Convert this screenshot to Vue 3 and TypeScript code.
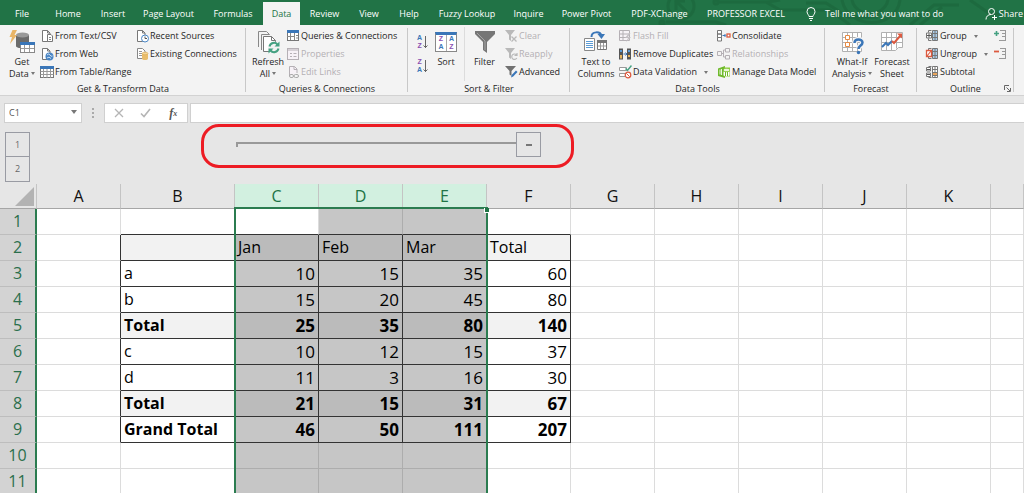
<script setup lang="ts">
import { ref } from 'vue'

interface Tool {
  icon: string
  label: string
  disabled?: boolean
  menu?: boolean
}

const tabs: string[] = [
  'File', 'Home', 'Insert', 'Page Layout', 'Formulas', 'Data', 'Review', 'View',
  'Help', 'Fuzzy Lookup', 'Inquire', 'Power Pivot', 'PDF-XChange', 'PROFESSOR EXCEL',
]
const activeTab = ref('Data')

const page = '<path d="M2.500 1.500h5l2.500 2.500v8.500h-7.500z" fill="#fff" stroke="#777"/><path d="M7.500 1.500v2.500h2.500" fill="none" stroke="#777"/>'

const icons: Record<string, string> = {
  csv: page + '<path d="M7.500 5.500h3.500l1.500 1.500v5.500h-5z" fill="#fff" stroke="#777"/><path d="M9 8.500h2M9 10.500h2" stroke="#888"/>',
  web: page + '<circle cx="9.500" cy="9.500" r="4" fill="#4a86c5"/><path d="M7 8q2-2 3 0t2.500 1M7 11q2-2 4 .5" stroke="#cfe1f3" fill="none"/>',
  table: '<rect x=".5" y="1.500" width="13" height="11" fill="#fff" stroke="#777"/><path d="M0 1h14v3H0z" fill="#3a76b8"/><path d="M.5 6.500h13M.5 9.500h13M3.500 4v9M7 4v9M10.500 4v9" stroke="#999"/>',
  recent: page + '<circle cx="10" cy="9.500" r="3.500" fill="#fff" stroke="#4a86c5"/><path d="M10 7.500v2h2" stroke="#555" fill="none"/>',
  existing: '<path d="M2.500 1.500h5l2.500 2.500v7.500h-7.500z" fill="#fff" stroke="#888"/><path d="M4 4.500h3M4 6.500h4M4 8.500h4" stroke="#999"/><path d="M7 6.500v5c0 2 6 2 6 0v-5z" fill="#e9bd6c"/><ellipse cx="10" cy="6.500" rx="3" ry="1.300" fill="#f5d698" stroke="#d9a64c" stroke-width=".6"/>',
  queries: '<rect x="1.500" y="1.500" width="11" height="10" fill="#fff" stroke="#777"/><path d="M1 1h12v3H1z" fill="#3a76b8"/><path d="M8.500 4v7M1 7.500h7M4.500 4v7M10 6.500h2M10 9h2" stroke="#888"/>',
  properties: '<rect x="1.500" y="1.500" width="11" height="11" fill="#f7f2f7" stroke="#b5b0b5"/><path d="M1.500 3h11M4 6.500h2M7.500 6.500h3M4 9.500h2M7.500 9.500h3" stroke="#b5b0b5"/>',
  links: '<path d="M3.500 11v-9.500h5l2.500 2.500v4" fill="#f7f2f7" stroke="#b5b0b5"/><path d="M8 1.500v3h3" stroke="#b5b0b5" fill="none"/><rect x="3.500" y="9.500" width="4" height="3" rx="1.500" fill="none" stroke="#aaa"/><rect x="8" y="9.500" width="4.500" height="3" rx="1.500" fill="none" stroke="#aaa"/>',
  clear: '<path d="M1 1h10l-4 5v6l-2-1.500V6z" fill="#b9b9b9"/><path d="M7.500 7.500l5 5m0-5l-5 5" stroke="#b9b9b9" stroke-width="1.300"/>',
  reapply: '<path d="M1 1h10l-4 5v6l-2-1.500V6z" fill="#b9b9b9"/><path d="M12.500 8a2.700 2.700 0 1 0 .3 3M13 6v2.500h-2.500" stroke="#b9b9b9" fill="none" stroke-width="1.200"/>',
  advanced: '<path d="M1 1h11l-4.500 5v5l-2-1.500V6z" fill="#707070"/><path d="M7 12.500l.7-2.500L12 5.500l1.500 1.500-4.300 4.600z" fill="#3a76b8"/>',
  flash: '<path d="M1.500 1.500h10v10h-10zM1.500 5h10M1.500 8.500h10M5 1.500v10" fill="#f7f2f7" stroke="#b5b0b5"/><path d="M11 4l-4 5h3l-2 4 5-5h-3l2.500-4z" fill="#c5c0c5"/>',
  duplicates: '<path d="M1 1.500h4v11H1zM9 1.500h4v11H9z" fill="#555"/><path d="M2 3h2v2H2zM10 3h2v2h-2z" fill="#5b9bd5"/><path d="M2 8h2v3.500H2zM10 8h2v2h-2z" fill="#e9b55c"/><path d="M5.500 7h3M7.500 5.500L9 7 7.500 8.500" stroke="#3a76b8" fill="none"/>',
  validation: '<path d="M1.500 2.500h7v3h-7zM1.500 8.500h6v3h-6z" fill="#fff" stroke="#999"/><path d="M7.500 3.500l2 2 4-5" stroke="#45a182" fill="none" stroke-width="1.500"/><circle cx="10" cy="10" r="2.800" fill="#fff" stroke="#dc5a40" stroke-width="1.200"/><path d="M8.300 8.300l3.400 3.400" stroke="#dc5a40"/>',
  consolidate: '<path d="M.5 1.500h4v3.500h-4zM.5 5h4v3.500h-4zM.5 8.500h4V12h-4z" fill="#fff" stroke="#777"/><path d="M5.500 6.500h3M7.500 5l1.500 1.500L7.500 8" stroke="#3a76b8" fill="none"/><rect x="10" y="5" width="3" height="3" fill="#fff" stroke="#dc5a40" stroke-width="1.300"/>',
  relationships: '<path d="M.5 4.500h4v4h-4zM8.500 1.500h4V5h-4zM8.500 8.500h4V12h-4zM4.500 6.500h2M8.500 3h-2v7h2" fill="none" stroke="#b5b0b5"/>',
  model: '<path d="M1 3.500L8 1v12L1 11z" fill="#6fb92c"/><path d="M7 2.500h6v9H7z" fill="#8acb3a"/><ellipse cx="9.500" cy="5" rx="3" ry="1.200" fill="#eaf6dc"/><path d="M6.500 6.500q3 1.500 6 0v4q-3 1.500-6 0z" fill="#fff"/><path d="M3 4.500v5M4.500 4v6" stroke="#eaf6dc"/><path d="M8.500 7v4M10.500 7v4" stroke="#6fb92c"/>',
  group: '<path d="M7.500 1.500h5v10h-5z" fill="#a9cbe9" stroke="#777"/><path d="M7.500 4.500h5M7.500 8.500h5M10 1.500v10M6.500 1.500h-3v2M6.500 11.500h-3v-2" stroke="#777" fill="none"/><path d="M1.500 4h5v5h-5z" fill="#fff" stroke="#777"/><path d="M4 4.500v4M2 6.500h4" stroke="#555"/>',
  ungroup: '<path d="M7.500 1.500h5v10h-5z" fill="#a9cbe9" stroke="#777"/><path d="M7.500 4.500h5M7.500 8.500h5M10 1.500v10M6.500 1.500h-3v2M6.500 11.500h-3v-2" stroke="#777" fill="none"/><path d="M1.500 3.500h5v6h-5z" fill="#fff" stroke="#dc5a40" stroke-width="1.300"/><path d="M2 9l4-5" stroke="#dc5a40" stroke-width="1.200"/>',
  subtotal: '<path d="M7.500 1.500h5v11h-5z" fill="#fff" stroke="#777"/><path d="M7.500 4.500h5M7.500 7.500h5M7.500 10.500h5M10 1.500v11M6.500 1.500h-3M6.500 12.500h-3" stroke="#777" fill="none"/><path d="M1.500 2.500h4v3.500h-4zM1.500 8h4v3.500h-4z" fill="#fff" stroke="#777"/><path d="M2 4.500h3M2 9.500h3" stroke="#555"/><path d="M8 8h4v2H8z" fill="#e9a55c"/>',
  getData: '<path d="M12 5v11c0 3 13 3 13 0V5z" fill="#6b6b6b" transform="translate(-5 1)"/><ellipse cx="13.500" cy="6" rx="6.500" ry="2.500" fill="#999"/><path d="M3.500 1H8L5.500 6H8L1 15l2-7H.5z" fill="#e9b567"/><rect x="11.500" y="13.500" width="14" height="10" fill="#fff" stroke="#888"/><path d="M11 13h15v3H11z" fill="#3a76b8"/><path d="M12 19.500h13M15.500 16v7M20.500 16v7" stroke="#999"/>',
  refresh: '<path d="M3.500 18V2.500h8l3 3M6.500 21V5.500h8" fill="none" stroke="#888"/><path d="M8.500 7.500h8l4 4v11h-12z" fill="#fff" stroke="#777"/><path d="M16.500 7.500v4h4" fill="none" stroke="#777"/><circle cx="19" cy="18.500" r="6" fill="#f3f3f3"/><path d="M14.500 17.500a4.600 4.600 0 0 1 8-2M23.500 19.500a4.600 4.600 0 0 1-8 2" fill="none" stroke="#45a182" stroke-width="2"/><path d="M24.500 12.500v5h-5zM13.500 24.500v-5h5z" fill="#45a182"/>',
  filter: '<path d="M3 2h20v3l-8 8v11l-4-3v-8L3 5z" fill="#767676"/><path d="M5 4l8 8v9" stroke="#a5a5a5" fill="none"/>',
  columns: '<path d="M1.500 9.500h10v12h-10z" fill="#fff" stroke="#888"/><path d="M3 12.500h7M3 14.500h7M3 16.500h7M3 18.500h7" stroke="#5b9bd5"/><path d="M14.500 12.500h9v8h-9z" fill="#fff" stroke="#777"/><path d="M14 11h10v3H14z" fill="#777"/><path d="M15 17h8M17.500 14v6M20.500 14v6" stroke="#999"/><path d="M8.500 8c0-6 9-6 10-1" stroke="#3a76b8" fill="none" stroke-width="2"/><path d="M14.500 5h7.500l-3.500 5z" fill="#3a76b8"/>',
  whatIf: '<path d="M3.500 3.500h19v19h-19zM3.500 8.500h19M3.500 13.500h19M3.500 18.500h19M8.500 3.500v19M13.500 3.500v19M18.500 3.500v19" fill="#fff" stroke="#b0b0b0"/><path d="M6.500 6.500h4v4h-4zM6.500 13.500h4v4h-4z" fill="#fff" stroke="#e78a42"/><path d="M15.500 14.500c0-6 8-5 8-1 0 3-4 3-4 6.500" stroke="#f3f3f3" stroke-width="5" fill="none"/><path d="M15.500 14c0-5 8-4.500 8-.5 0 3-4 3-4 6.500" stroke="#3a76b8" stroke-width="2.500" fill="none"/><circle cx="19.500" cy="23.500" r="1.700" fill="#3a76b8"/>',
  forecast: '<path d="M2.500 3.500h21v15h-4l-3 3h-14zM2.500 8.500h21M2.500 13.500h21M7.500 3.500v18M12.500 3.500v18M17.500 3.500v16" fill="#fff" stroke="#b0b0b0"/><path d="M3 18l4-4 2 2 4-4" stroke="#3a76b8" stroke-width="2" fill="none"/><path d="M13 12l2 2 7-8" stroke="#dc5a40" stroke-width="2" fill="none"/><path d="M18 4.500h5v5z" fill="#dc5a40"/>',
}

const getTools: Tool[][] = [
  [
    { icon: 'csv', label: 'From Text/CSV' },
    { icon: 'web', label: 'From Web' },
    { icon: 'table', label: 'From Table/Range' },
  ],
  [
    { icon: 'recent', label: 'Recent Sources' },
    { icon: 'existing', label: 'Existing Connections' },
  ],
]
const queryTools: Tool[] = [
  { icon: 'queries', label: 'Queries & Connections' },
  { icon: 'properties', label: 'Properties', disabled: true },
  { icon: 'links', label: 'Edit Links', disabled: true },
]
const filterTools: Tool[] = [
  { icon: 'clear', label: 'Clear', disabled: true },
  { icon: 'reapply', label: 'Reapply', disabled: true },
  { icon: 'advanced', label: 'Advanced' },
]
const dataTools: Tool[][] = [
  [
    { icon: 'flash', label: 'Flash Fill', disabled: true },
    { icon: 'duplicates', label: 'Remove Duplicates' },
    { icon: 'validation', label: 'Data Validation', menu: true },
  ],
  [
    { icon: 'consolidate', label: 'Consolidate' },
    { icon: 'relationships', label: 'Relationships', disabled: true },
    { icon: 'model', label: 'Manage Data Model' },
  ],
]
const outlineTools: Tool[] = [
  { icon: 'group', label: 'Group', menu: true },
  { icon: 'ungroup', label: 'Ungroup', menu: true },
  { icon: 'subtotal', label: 'Subtotal' },
]

const columns: string[] = ['A', 'B', 'C', 'D', 'E', 'F', 'G', 'H', 'I', 'J', 'K', '']
const rowCount = 11
const sheet: Record<number, (string | number)[]> = {
  2: ['', 'Jan', 'Feb', 'Mar', 'Total'],
  3: ['a', 10, 15, 35, 60],
  4: ['b', 15, 20, 45, 80],
  5: ['Total', 25, 35, 80, 140],
  6: ['c', 10, 12, 15, 37],
  7: ['d', 11, 3, 16, 30],
  8: ['Total', 21, 15, 31, 67],
  9: ['Grand Total', 46, 50, 111, 207],
}

const isSelected = (c: number): boolean => c >= 2 && c <= 4

function cellValue(r: number, c: number): string | number {
  return c >= 1 && c <= 5 ? sheet[r]?.[c - 1] ?? '' : ''
}

function cellClass(r: number, c: number): Record<string, boolean> {
  const inTable = r >= 2 && r <= 9 && c >= 1 && c <= 5
  return {
    selected: isSelected(c) && !(r === 1 && c === 2),
    shaded: inTable && (r === 2 || r === 5 || r === 8),
    bold: inTable && (r === 5 || r >= 8),
    number: typeof cellValue(r, c) === 'number',
    'line-right': r >= 2 && r <= 9 && c <= 5,
    'line-bottom': r <= 9 && c >= 1 && c <= 5,
  }
}

const cellName = ref('C1')
const formula = ref('')
</script>

<template>
  <div class="app">
    <nav class="tabbar" aria-label="Ribbon tabs">
      <svg class="circuit" viewBox="0 0 400 25" aria-hidden="true">
        <g fill="none" stroke="#1b6339" stroke-width="3">
          <circle cx="61" cy="6" r="13" />
          <path d="M55 0l12 12M56 10V1h9" />
          <path d="M98 2h50l12 -2M46 22h50l10 3M146 2l14 8h50l20 15M186 3h20l22 14h30M232 0c4 18 32 18 36 0M222 0c6 30 54 30 58 0M290 25l24-20h25M300 25l22-18M350 0l20 14h30" />
          <circle cx="96" cy="2" r="2" /><circle cx="42" cy="23" r="2" />
        </g>
      </svg>
      <button
        v-for="tab in tabs" :key="tab" class="tab" :class="{ active: tab === activeTab }"
        type="button" @click="activeTab = tab"
      >{{ tab }}</button>
      <button class="tell" type="button">
        <svg width="12" height="14" viewBox="0 0 12 14" fill="none" stroke="#fff" aria-hidden="true">
          <path d="M4 9.500c0-1.500-2-2.500-2-5a4 4 0 0 1 8 0c0 2.500-2 3.500-2 5zM4 11.500h4M5 13.500h2" />
        </svg>
        <span>Tell me what you want to do</span>
      </button>
      <button class="share" type="button">
        <svg width="13" height="14" viewBox="0 0 13 14" fill="none" stroke="#fff" aria-hidden="true">
          <circle cx="6.500" cy="4.500" r="3" /><path d="M1 12.500c0-3 2-5 5-5M7 10.500h5M9.500 8v5" />
        </svg>
        <span>Share</span>
      </button>
    </nav>

    <div class="ribbon">
      <section class="group">
        <div class="tools">
          <button class="large get" type="button">
            <svg viewBox="0 0 26 26" v-html="icons.getData" />
            <span>Get<br>Data <i class="caret" /></span>
          </button>
          <div v-for="(col, i) in getTools" :key="i" class="stack" :class="{ first: i === 0 }">
            <button v-for="t in col" :key="t.label" class="small" type="button">
              <svg viewBox="0 0 14 14" v-html="icons[t.icon]" />{{ t.label }}
            </button>
          </div>
        </div>
        <h2>Get &amp; Transform Data</h2>
      </section>

      <section class="group">
        <div class="tools">
          <button class="large get" type="button">
            <svg viewBox="0 0 26 26" v-html="icons.refresh" />
            <span>Refresh<br>All <i class="caret" /></span>
          </button>
          <div class="stack">
            <button v-for="t in queryTools" :key="t.label" class="small" type="button" :disabled="t.disabled">
              <svg viewBox="0 0 14 14" v-html="icons[t.icon]" />{{ t.label }}
            </button>
          </div>
        </div>
        <h2>Queries &amp; Connections</h2>
      </section>

      <section class="group">
        <div class="tools">
          <div class="orders">
            <button type="button" aria-label="Sort A to Z">
              <span class="pair"><b class="a">A</b><b class="z">Z</b></span>
              <svg width="5" height="14" viewBox="0 0 5 14" fill="none" stroke="#666"><path d="M2.500 1v12M.5 10.500l2 2 2-2" /></svg>
            </button>
            <button type="button" aria-label="Sort Z to A">
              <span class="pair"><b class="z">Z</b><b class="a">A</b></span>
              <svg width="5" height="14" viewBox="0 0 5 14" fill="none" stroke="#666"><path d="M2.500 1v12M.5 10.500l2 2 2-2" /></svg>
            </button>
          </div>
          <button class="large sort" type="button">
            <span class="sort-icon">
              <span class="pair"><b class="z">Z</b><b class="a">A</b></span>
              <span class="pair"><b class="a">A</b><b class="z">Z</b></span>
            </span>
            <span>Sort</span>
          </button>
          <button class="large filter" type="button">
            <svg viewBox="0 0 26 26" v-html="icons.filter" />
            <span>Filter</span>
          </button>
          <div class="stack">
            <button v-for="t in filterTools" :key="t.label" class="small" type="button" :disabled="t.disabled">
              <svg viewBox="0 0 14 14" v-html="icons[t.icon]" />{{ t.label }}
            </button>
          </div>
        </div>
        <h2>Sort &amp; Filter</h2>
      </section>

      <section class="group">
        <div class="tools">
          <button class="large wide" type="button">
            <svg viewBox="0 0 26 26" v-html="icons.columns" />
            <span>Text to<br>Columns</span>
          </button>
          <div v-for="(col, i) in dataTools" :key="i" class="stack" :class="{ second: i === 0 }">
            <button v-for="t in col" :key="t.label" class="small" type="button" :disabled="t.disabled">
              <svg viewBox="0 0 14 14" v-html="icons[t.icon]" />{{ t.label }}<i v-if="t.menu" class="caret" />
            </button>
          </div>
        </div>
        <h2>Data Tools</h2>
      </section>

      <section class="group">
        <div class="tools center">
          <button class="large" type="button">
            <svg viewBox="0 0 26 26" v-html="icons.whatIf" />
            <span>What-If<br>Analysis <i class="caret" /></span>
          </button>
          <button class="large" type="button">
            <svg viewBox="0 0 26 26" v-html="icons.forecast" />
            <span>Forecast<br>Sheet</span>
          </button>
        </div>
        <h2>Forecast</h2>
      </section>

      <section class="group">
        <div class="tools outline">
          <div class="stack">
            <button v-for="t in outlineTools" :key="t.label" class="small" type="button">
              <svg viewBox="0 0 14 14" v-html="icons[t.icon]" />{{ t.label }}<i v-if="t.menu" class="caret" />
            </button>
          </div>
          <div class="stack">
            <button class="small" type="button" aria-label="Show Detail">
              <svg viewBox="0 0 14 14" fill="none"><path d="M0 4.500h5M2.500 2v5" stroke="#45a182" stroke-width="1.600" /><path d="M6 1.500h6M8 4.500h4M8 7.500h4M5 11.500h7M11.500 1v11" stroke="#999" /></svg>
            </button>
            <button class="small" type="button" aria-label="Hide Detail">
              <svg viewBox="0 0 14 14" fill="none"><path d="M0 4.500h5" stroke="#dc5a40" stroke-width="1.800" /><path d="M6 1.500h6M8 4.500h4M8 7.500h4M5 11.500h7M11.500 1v11" stroke="#999" /></svg>
            </button>
          </div>
        </div>
        <h2>Outline</h2>
        <button class="launcher" type="button" aria-label="Outline settings">
          <svg width="7" height="7" viewBox="0 0 7 7" fill="none" stroke="#666"><path d="M.5 5V.5H5M2.500 2.500l3.500 3.500M6.500 3v3.500H3" /></svg>
        </button>
      </section>
    </div>

    <div class="formula-bar">
      <div class="name-box">
        <input v-model="cellName" aria-label="Name box">
        <button type="button" aria-label="Names"><i class="caret" /></button>
      </div>
      <span class="grip"><i /><i /><i /></span>
      <div class="entry">
        <button type="button" aria-label="Cancel"><svg width="10" height="10" viewBox="0 0 10 10" fill="none" stroke="#b5b5b5" stroke-width="1.300"><path d="M1 1l8 8M9 1L1 9" /></svg></button>
        <button type="button" aria-label="Enter"><svg width="11" height="10" viewBox="0 0 11 10" fill="none" stroke="#b5b5b5" stroke-width="1.600"><path d="M1 5.500l3 3L10 1" /></svg></button>
        <button class="fx" type="button" aria-label="Insert Function">f<sub>x</sub></button>
      </div>
      <input v-model="formula" class="formula" aria-label="Formula">
    </div>

    <div class="outline-bar">
      <div class="levels">
        <button type="button">1</button>
        <button type="button">2</button>
      </div>
      <div class="bracket">
        <span class="line" />
        <div class="dots"><i /><i /><i /></div>
      </div>
      <button class="collapse" type="button" aria-label="Collapse columns"><i /></button>
      <div class="callout" />
    </div>

    <main class="grid">
      <table>
        <colgroup>
          <col class="w-head"><col class="w-std"><col class="w-label">
          <col v-for="n in 9" :key="n" class="w-std">
          <col>
        </colgroup>
        <thead>
          <tr>
            <th class="corner"><svg width="19" height="19" viewBox="0 0 19 19"><path d="M19 0v19H0z" fill="#b3b3b3" /></svg></th>
            <th v-for="(name, c) in columns" :key="c" scope="col" :class="{ picked: isSelected(c) }">{{ name }}</th>
          </tr>
        </thead>
        <tbody>
          <tr v-for="r in rowCount" :key="r">
            <th scope="row">{{ r }}</th>
            <td v-for="(name, c) in columns" :key="c" :class="cellClass(r, c)">{{ cellValue(r, c) }}</td>
          </tr>
        </tbody>
      </table>
      <div class="selection"><i /></div>
    </main>
  </div>
</template>

<style>
body {
  margin: 0;
  overflow: hidden;
}
</style>

<style scoped>
.app,
.app * {
  box-sizing: border-box;
}
.app {
  height: 100vh;
  overflow: hidden;
  background: #e6e6e6;
  color: #262626;
  font: 9px/12px "Open Sans", "Noto Sans", sans-serif;
}
button {
  margin: 0;
  padding: 0;
  border: 0;
  background: none;
  color: inherit;
  font: inherit;
  white-space: nowrap;
}
input {
  min-width: 0;
  border: 0;
  background: #fff;
  color: #555;
  font: inherit;
  outline: none;
}
svg {
  flex: none;
  display: block;
}

/* Tabs */
.tabbar {
  position: relative;
  display: grid;
  grid-template-columns: 44px 48px 42px 69px 60px 37px 49px 40px 40px 76px 47px 69px 77px 96px 1fr auto;
  height: 25px;
  padding-top: 2px;
  background: #217346;
  color: #fff;
}
.circuit {
  position: absolute;
  top: 0;
  right: 4px;
  width: 400px;
  height: 25px;
  opacity: 0.5;
}
.tab {
  position: relative;
}
.tab.active {
  background: #f3f3f3;
  color: #217346;
}
.tell,
.share {
  position: relative;
  display: flex;
  align-items: center;
  gap: 8px;
  padding-left: 11px;
}
.share {
  gap: 1px;
  padding-right: 1px;
}

/* Ribbon */
.ribbon {
  display: grid;
  grid-template-columns: 246fr 162fr 162fr 255fr 92fr 97fr 10fr;
  height: 71px;
  padding-top: 2px;
  border-bottom: 1px solid #d2d2d2;
  background: #f3f3f3;
}
.group {
  position: relative;
  min-width: 0;
}
.group::after {
  content: "";
  position: absolute;
  top: 1px;
  right: 0;
  bottom: 3px;
  width: 1px;
  background: #c8c8c8;
}
.group h2 {
  margin: 1px 0 0;
  font: inherit;
  line-height: 13px;
  text-align: center;
}
.tools {
  display: flex;
  height: 54px;
}
.tools.center {
  justify-content: center;
  padding-left: 2px;
}
.tools.outline {
  justify-content: space-between;
  padding: 0 6px 0 8px;
}
.large {
  display: flex;
  flex-direction: column;
  align-items: center;
  gap: 1px;
  width: 40px;
  padding-top: 2px;
  text-align: center;
}
.large.get {
  padding-left: 4px;
}
.large svg {
  width: 26px;
  height: 26px;
}
.large.wide {
  width: 48px;
  padding-left: 4px;
}
.small {
  display: flex;
  align-items: center;
  gap: 1px;
  height: 18px;
}
.small svg {
  width: 14px;
  height: 14px;
}
.small .caret {
  margin-left: 6px;
}
button:disabled {
  color: #b3b0b3;
}
.first {
  width: 95px;
}
.second {
  width: 99px;
}
.caret {
  display: inline-block;
  border: 2px solid transparent;
  border-top: 3px solid #777;
  border-bottom: 0;
  vertical-align: 2px;
}
.a {
  color: #3a76b8;
}
.z {
  color: #8a4fb0;
}
.orders {
  display: flex;
  flex-direction: column;
  gap: 8px;
  width: 26px;
  padding: 7px 0 0 9px;
}
.orders button {
  display: flex;
  align-items: center;
  gap: 1px;
  height: 16px;
}
.pair {
  display: grid;
  justify-items: center;
  font: 7px/8px "Liberation Sans", sans-serif;
}
.sort {
  width: 24px;
}
.filter {
  width: 40px;
  margin-left: 6px;
  border-left: 1px solid #dcdcdc;
}
.sort-icon {
  display: grid;
  grid-template-columns: 1fr 1fr;
  width: 22px;
  height: 20px;
  margin: 3px 0;
  border: 1px solid #888;
  border-top: 3px solid #3a76b8;
  background: #fff;
}
.sort-icon .pair + .pair {
  border-left: 1px solid #aaa;
}
.launcher {
  position: absolute;
  right: 3px;
  bottom: 3px;
}

/* Formula bar */
.formula-bar {
  display: flex;
  height: 28px;
  padding: 7px 0 1px 4px;
}
.name-box,
.entry,
.formula {
  height: 20px;
  border: 1px solid #d0d0d0;
  background: #fff;
}
.name-box {
  display: flex;
  width: 78px;
  padding: 0 4px;
}
.name-box input {
  flex: 1;
  padding: 0;
}
.name-box .caret {
  border-width: 4px 3px 0;
}
.grip {
  display: grid;
  align-content: center;
  justify-content: center;
  gap: 2px;
  width: 22px;
}
.grip i {
  width: 2px;
  height: 2px;
  background: #aaa;
}
.entry {
  display: grid;
  grid-template-columns: repeat(3, 1fr);
  width: 84px;
  margin-right: 2px;
}
.entry button {
  display: flex;
  align-items: center;
  justify-content: center;
}
.entry .fx {
  color: #555;
  font: italic bold 12px "Liberation Serif", serif;
}
.fx sub {
  font-size: 8px;
}
.formula {
  flex: 1;
  border-right: 0;
}

/* Outline bar */
.outline-bar {
  position: relative;
  display: flex;
  height: 60px;
  padding: 8px 0 0 5px;
}
.levels {
  display: grid;
  grid-template-rows: 25px 25px;
  width: 231px;
}
.levels button,
.collapse {
  width: 25px;
  border: 1px solid #999ba3;
  color: #666;
}
.levels button + button {
  border-top: 0;
}
.bracket {
  display: flex;
  flex-direction: column;
  justify-content: space-between;
  width: 280px;
  height: 36px;
  padding-top: 10px;
}
.line {
  height: 5px;
  border-top: 2px solid #999;
  border-left: 2px solid #999;
}
.dots {
  display: grid;
  grid-template-columns: repeat(3, 84px);
  justify-items: center;
}
.dots i {
  width: 2px;
  height: 2px;
  background: #888;
}
.collapse {
  display: flex;
  align-items: center;
  justify-content: center;
  height: 25px;
}
.collapse i {
  width: 6px;
  height: 2px;
  background: #777;
}
.callout {
  position: absolute;
  top: 0;
  left: 201px;
  width: 373px;
  height: 44px;
  border: 3px solid #ed1c24;
  border-radius: 18px;
}

/* Sheet */
.grid {
  position: relative;
}
table {
  width: 100%;
  table-layout: fixed;
  border-collapse: separate;
  border-spacing: 0;
  background: #fff;
  font: 16px/25px "Open Sans", "Noto Sans", sans-serif;
}
.w-head {
  width: 37px;
}
.w-std {
  width: 84px;
}
.w-label {
  width: 114px;
}
th,
td {
  height: 26px;
  padding: 0;
  border-right: 1px solid #dcdcdc;
  border-bottom: 1px solid #dcdcdc;
  font-weight: 400;
  white-space: nowrap;
}
thead th {
  height: 25px;
  border-right-color: #c4c4c4;
  border-bottom-color: #a6a6a6;
  background: #e6e6e6;
  color: #111;
  line-height: 24px;
}
thead .picked {
  background: #d2f0e0;
  color: #217346;
}
.corner svg {
  margin-left: 15px;
}
tbody th {
  border-right: 2px solid #2b7c50;
  border-bottom-color: #bdbdbd;
  background: #d3d3d3;
  color: #2b6f4c;
}
td {
  padding: 0 3px;
  color: #000;
  text-align: left;
}
.number {
  text-align: right;
  font-size: 17px;
}
.shaded {
  background: #f2f2f2;
}
.selected {
  border-color: #adadad;
  background: #c6c6c6;
}
.selected.shaded {
  background: #bbb;
}
.bold {
  font-weight: 700;
}
.line-right {
  border-right-color: #333;
}
.line-bottom {
  border-bottom-color: #333;
}
.selection {
  position: absolute;
  top: 23px;
  bottom: 0;
  left: 234px;
  width: 254px;
  border: 2px solid #2b7c50;
  border-bottom: 0;
}
.selection i {
  position: absolute;
  top: -1px;
  right: -3px;
  width: 5px;
  height: 5px;
  border: 1px solid #fff;
  border-width: 0 0 1px 1px;
  background: #217346;
}
</style>
